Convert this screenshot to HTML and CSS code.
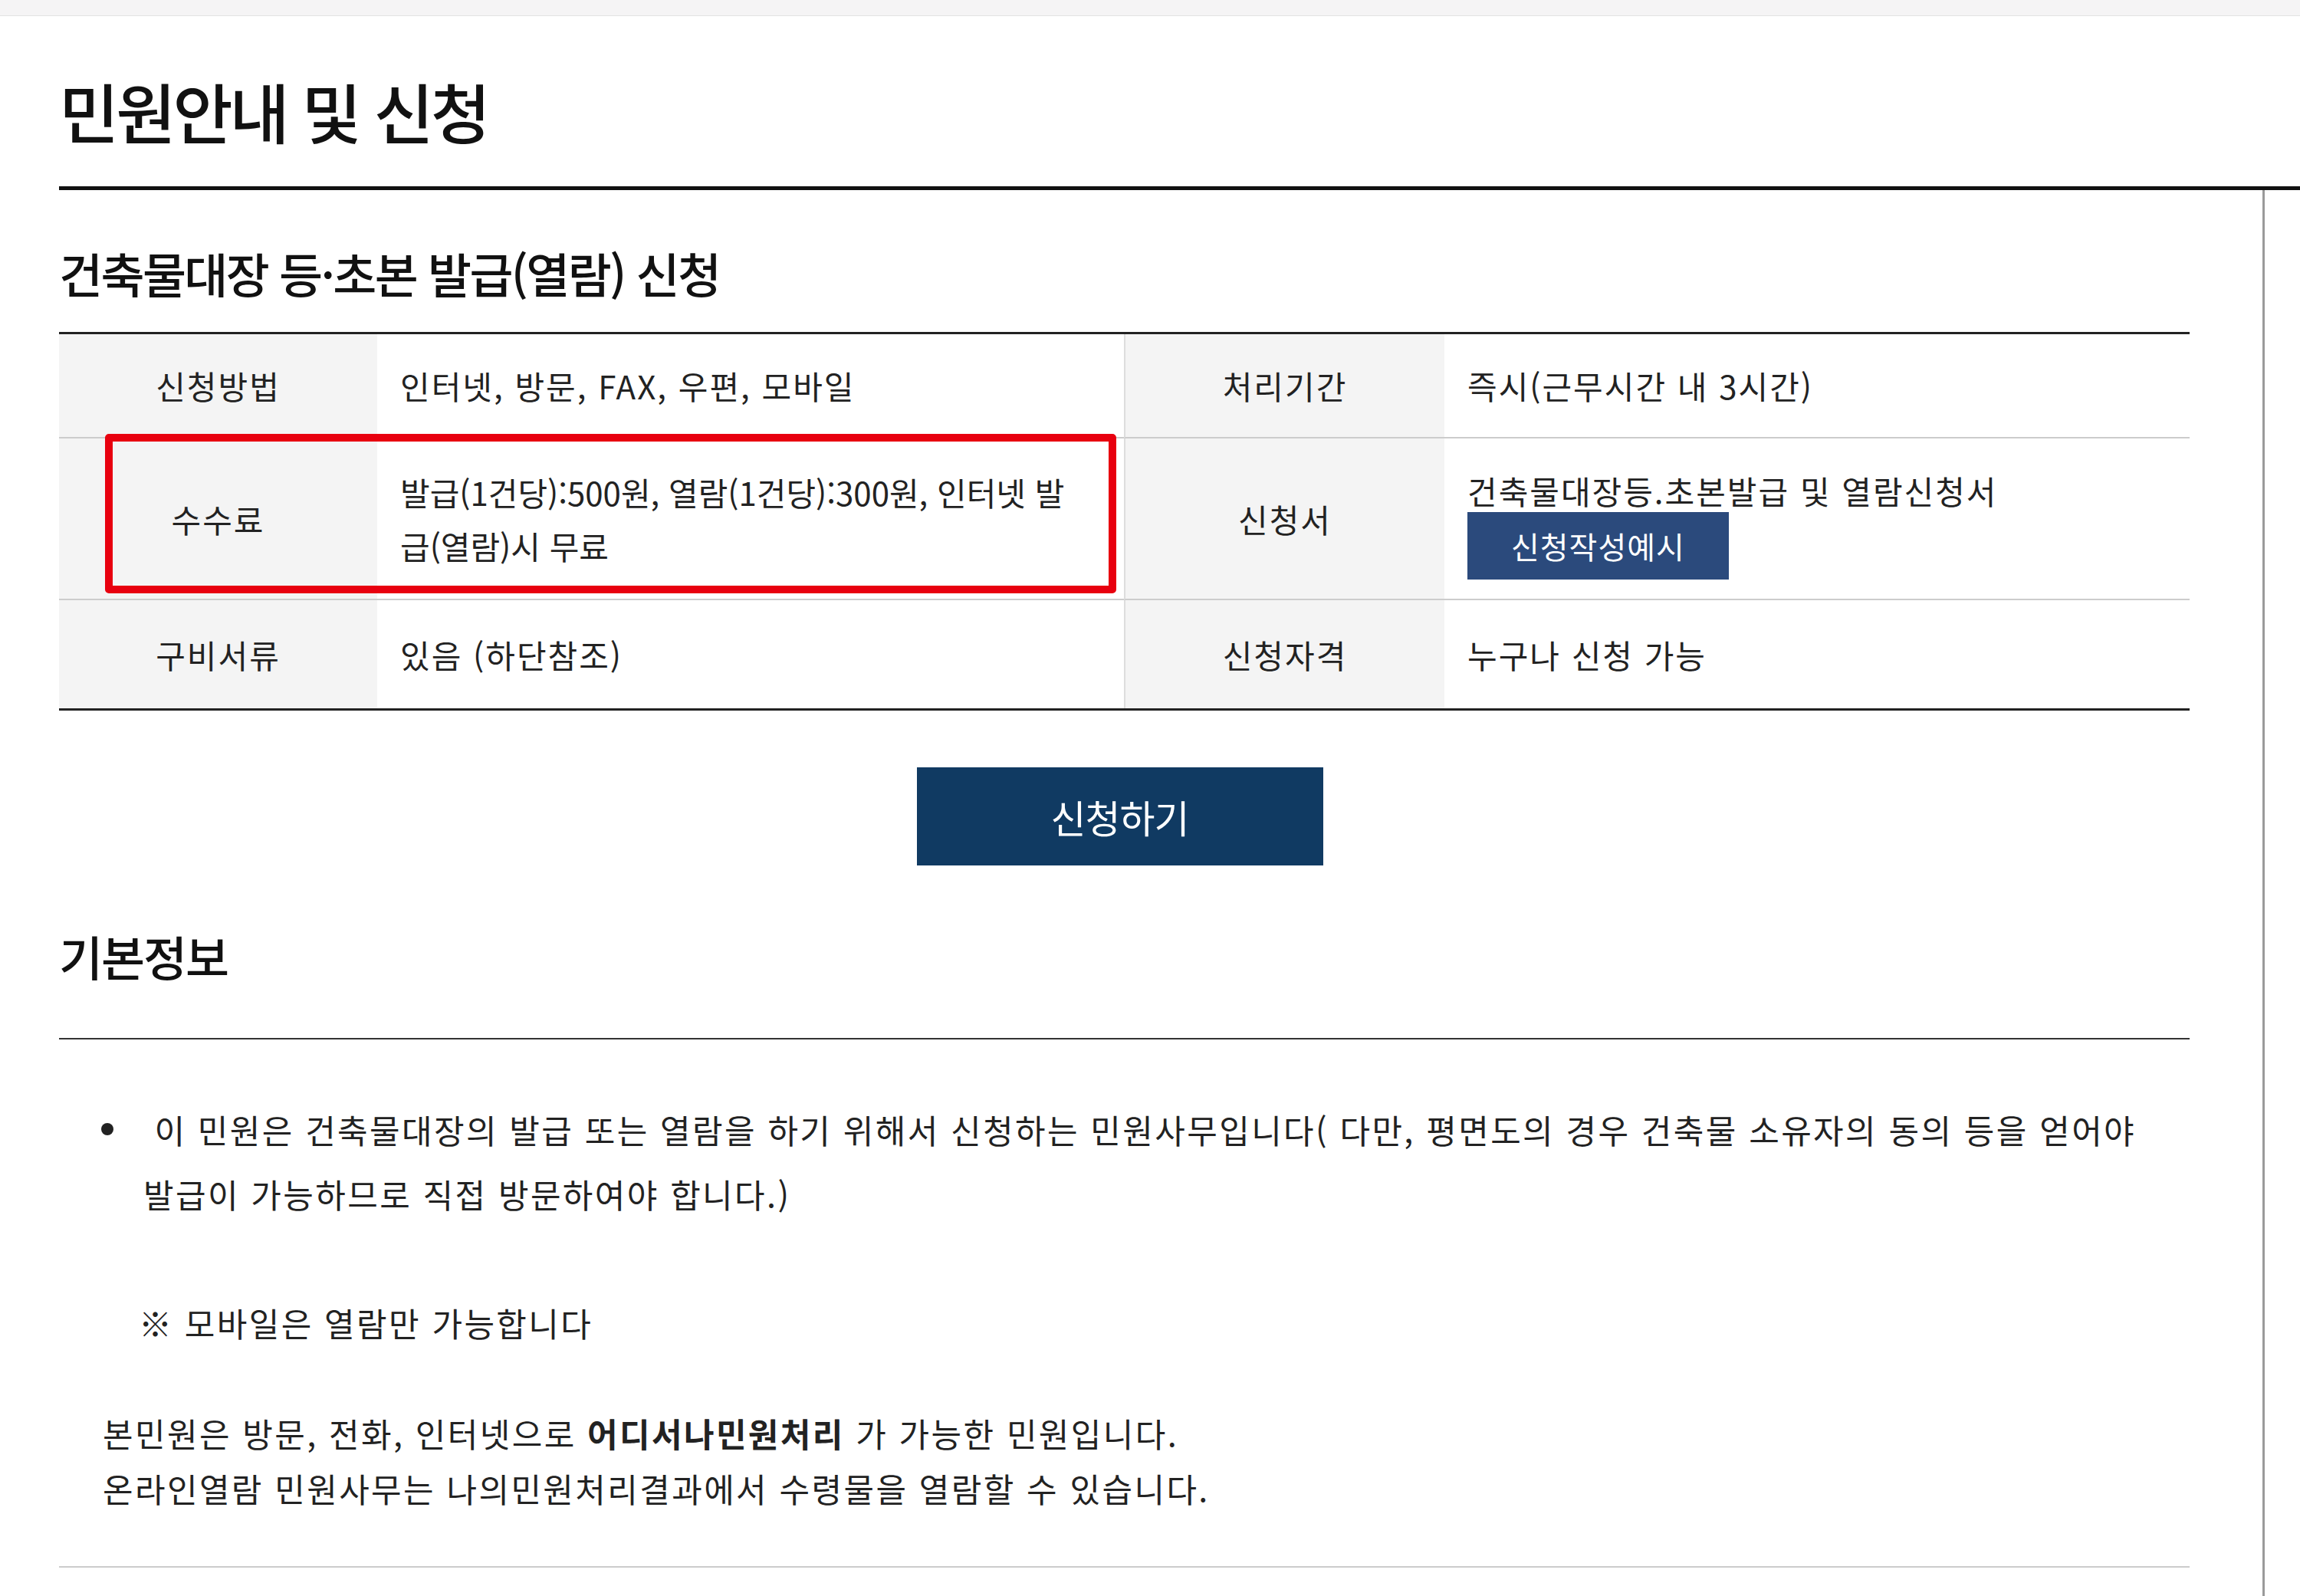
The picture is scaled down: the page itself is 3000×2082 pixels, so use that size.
FILE: index.html
```html
<!DOCTYPE html>
<html lang="ko">
<head>
<meta charset="utf-8">
<title>민원안내 및 신청</title>
<link rel="stylesheet" href="styles.css">
</head>
<body>
<div class="topbar"></div>
<header class="page-head">
  <h1 class="page-title">민원안내 및 신청</h1>
</header>
<div class="main">
  <section class="service">
    <h2 class="service-title">건축물대장 등·초본 발급(열람) 신청</h2>
    <div class="info-grid">
      <div class="th">신청방법</div>
      <div class="td">인터넷, 방문, FAX, 우편, 모바일</div>
      <div class="th th-right">처리기간</div>
      <div class="td">즉시(근무시간 내 3시간)</div>

      <div class="th">수수료</div>
      <div class="td td-fee">발급(1건당):500원, 열람(1건당):300원, 인터넷 발급(열람)시 무료</div>
      <div class="th th-right">신청서</div>
      <div class="td td-form">
        <span class="form-name">건축물대장등.초본발급 및 열람신청서</span>
        <a class="btn-example">신청작성예시</a>
      </div>

      <div class="th last">구비서류</div>
      <div class="td last">있음 (하단참조)</div>
      <div class="th th-right last">신청자격</div>
      <div class="td last">누구나 신청 가능</div>

      <div class="highlight"></div>
    </div>

    <div class="apply-wrap"><a class="btn-apply">신청하기</a></div>

    <h2 class="section-title">기본정보</h2>
    <ul class="info-list">
      <li>&nbsp;이 민원은 건축물대장의 발급 또는 열람을 하기 위해서 신청하는 민원사무입니다( 다만, 평면도의 경우 건축물 소유자의 동의 등을 얻어야 발급이 가능하므로 직접 방문하여야 합니다.)<br><br><span class="note">※ 모바일은 열람만 가능합니다</span></li>
    </ul>
    <p class="desc">본민원은 방문, 전화, 인터넷으로 <strong>어디서나민원처리</strong> 가 가능한 민원입니다.<br>온라인열람 민원사무는 나의민원처리결과에서 수령물을 열람할 수 있습니다.</p>
    <hr class="end-line">
  </section>
</div>
</body>
</html>
```
FILE: styles.css
```css
* { box-sizing: border-box; }

body {
  margin: 0;
  font-family: "Noto Sans CJK KR", "Noto Sans", sans-serif;
  color: #222;
  background: #fff;
}

.topbar {
  height: 21px;
  background: #f5f4f5;
  border-bottom: 1px solid #e3e3e3;
}

.page-head {
  margin-left: 77px;
  padding-top: 73px;
  padding-bottom: 49px;
  border-bottom: 5px solid #111;
}

.page-title {
  margin: 0;
  font-size: 85px;
  line-height: 100px;
  font-weight: 500;
  letter-spacing: -4px;
  color: #111;
}

.main {
  display: flow-root;
  margin-left: 77px;
  width: 2877px;
  padding-right: 95px;
  border-right: 3px solid #9a9a9a;
  min-height: 1834px;
}

.service-title {
  margin: 73px 0 42px;
  font-size: 62px;
  line-height: 70px;
  font-weight: 500;
  letter-spacing: -2.6px;
  color: #111;
}

.info-grid {
  position: relative;
  display: grid;
  grid-template-columns: 415px 974px 418px 972px;
  grid-template-rows: 136px 211px 141px;
  border-top: 3px solid #222;
  border-bottom: 3px solid #222;
}

.th, .td {
  display: flex;
  align-items: center;
  font-size: 42px;
  line-height: 70px;
  letter-spacing: 2px;
  border-bottom: 2px solid #ccc;
  color: #222;
}

.th.last, .td.last { border-bottom: 0; }

.th {
  justify-content: center;
  background: #f4f4f4;
}

.th-right { border-left: 2px solid #ddd; }

.td { padding: 0 20px 0 30px; }

.td-fee {
  letter-spacing: 0;
  padding-right: 40px;
}

.td-form {
  flex-direction: column;
  align-items: flex-start;
  justify-content: center;
  padding-top: 14px;
}

.form-name { line-height: 56px; }

.btn-example {
  display: inline-block;
  height: 88px;
  line-height: 88px;
  padding: 0 57px;
  background: #2b4a7c;
  color: #fff;
  font-size: 40px;
  letter-spacing: 1px;
}

.highlight {
  position: absolute;
  left: 60px;
  top: 130px;
  width: 1319px;
  height: 208px;
  border: 10px solid #e8000f;
  border-radius: 5px;
  pointer-events: none;
}

.apply-wrap {
  display: flex;
  justify-content: center;
  margin-top: 74px;
  padding-right: 12px;
}

.btn-apply {
  width: 530px;
  height: 128px;
  display: flex;
  align-items: center;
  justify-content: center;
  background: #103a62;
  color: #fff;
  font-size: 50px;
  letter-spacing: -1px;
}

.section-title {
  margin: 83px 0 0;
  padding-bottom: 72px;
  border-bottom: 2px solid #333;
  font-size: 62px;
  line-height: 70px;
  font-weight: 500;
  letter-spacing: -2px;
  color: #111;
}

.info-list {
  list-style: none;
  margin: 75px 0 0;
  padding: 0 0 0 110px;
  font-size: 43px;
  line-height: 84px;
  letter-spacing: 2.4px;
  word-break: keep-all;
}

.info-list li { position: relative; }

.info-list li::before {
  content: "";
  position: absolute;
  left: -55px;
  top: 34px;
  width: 16px;
  height: 16px;
  border-radius: 50%;
  background: #222;
}

.note { margin-left: -6px; }

.desc {
  margin: 66px 0 0;
  padding-left: 57px;
  font-size: 43px;
  line-height: 72px;
  letter-spacing: 2.4px;
}

.desc strong { font-weight: 700; }

.end-line {
  margin: 66px 0 0;
  height: 0;
  border: 0;
  border-top: 2px solid #ccc;
}
```
